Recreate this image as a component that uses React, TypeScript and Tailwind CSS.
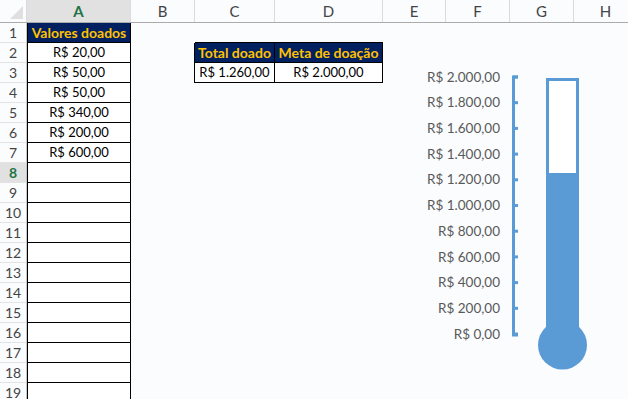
import React from "react";

const font = { fontFamily: "Lato, 'Open Sans', sans-serif" };

const headers = [
  { l: "A", w: "w-[104px]", sel: true },
  { l: "B", w: "w-[64px]" },
  { l: "C", w: "w-[80px]" },
  { l: "D", w: "w-[108px]" },
  { l: "E", w: "w-[63px]" },
  { l: "F", w: "w-[64px]" },
  { l: "G", w: "w-[64px]" },
  { l: "H", w: "w-[64px]" },
];

const donations = ["R$ 20,00", "R$ 50,00", "R$ 50,00", "R$ 340,00", "R$ 200,00", "R$ 600,00"];

const axisLabels = [
  "R$ 2.000,00",
  "R$ 1.800,00",
  "R$ 1.600,00",
  "R$ 1.400,00",
  "R$ 1.200,00",
  "R$ 1.000,00",
  "R$ 800,00",
  "R$ 600,00",
  "R$ 400,00",
  "R$ 200,00",
  "R$ 0,00",
];

function Row({ n }: { n: number }) {
  const selected = n === 8;
  const inTable = n === 2 || n === 3;
  return (
    <div className="flex h-[20px]">
      <div
        className={
          "w-[27px] shrink-0 flex items-center justify-center border-r border-b border-r-[#c6c6c6] border-b-[#e3e3e3] text-[14px] " +
          (selected ? "bg-[#e1e1e1] text-[#217346] font-bold" : "text-[#444]")
        }
      >
        {n}
      </div>
      {n === 1 ? (
        <div className="w-[104px] shrink-0 flex items-center justify-center border-l border-r border-b border-black bg-[#002060] text-[#ffc000] font-bold text-[14px]">
          Valores doados
        </div>
      ) : (
        <div className="w-[104px] shrink-0 flex items-center justify-center border-r border-b border-l border-black bg-white text-[13px] text-black">
          {donations[n - 2] ?? ""}
        </div>
      )}
      <div className={"w-[64px] shrink-0 " + (inTable ? "border-r border-black" : "")} />
      {n === 2 ? (
        <>
          <div className="w-[80px] shrink-0 flex items-center justify-center border-r border-b border-black bg-[#002060] text-[#ffc000] font-bold text-[14px]">
            Total doado
          </div>
          <div className="w-[108px] shrink-0 flex items-center justify-center border-r border-b border-black bg-[#002060] text-[#ffc000] font-bold text-[14px]">
            Meta de doação
          </div>
        </>
      ) : n === 3 ? (
        <>
          <div className="w-[80px] shrink-0 flex items-center justify-center border-r border-b border-black bg-white text-[13px]">
            R$ 1.260,00
          </div>
          <div className="w-[108px] shrink-0 flex items-center justify-center border-r border-b border-black bg-white text-[13px]">
            R$ 2.000,00
          </div>
        </>
      ) : (
        <>
          <div className={"w-[80px] shrink-0 " + (n === 1 ? "border-b border-black" : "")} />
          <div className={"w-[108px] shrink-0 " + (n === 1 ? "border-b border-black" : "")} />
        </>
      )}
    </div>
  );
}

function Thermometer() {
  const blue = "#5b9bd5";
  return (
    <div className="absolute left-[410px] top-[64px] flex">
      <div className="flex flex-col w-[90px] text-[#595959] text-[13.5px]">
        {axisLabels.map((l) => (
          <div key={l} className="h-[25.7px] flex items-center justify-end">
            {l}
          </div>
        ))}
      </div>
      <svg width="100" height="310" viewBox="0 0 100 310">
        <path d="M18 13 H13.5 V271 H18" fill="none" stroke={blue} strokeWidth="3" />
        {axisLabels.map((_, i) => (
          <line key={i} x1="13" x2="18" y1={13 + 25.7 * i} y2={13 + 25.7 * i} stroke={blue} strokeWidth="3" />
        ))}
        <rect x="46" y="14" width="33" height="267" fill={blue} />
        <rect x="49" y="17" width="27" height="92" fill="#ffffff" />
        <circle cx="62.5" cy="281" r="24.5" fill={blue} />
      </svg>
    </div>
  );
}

export default function App() {
  return (
    <div className="relative w-[628px] h-[399px] overflow-hidden bg-[#fafcfe]" style={font}>
      <div className="flex h-[23px] border-b border-[#ababab]">
        <div className="w-[27px] shrink-0 relative border-r border-[#dadbdc]">
          <svg className="absolute right-[3px] bottom-[3px]" width="13" height="13" viewBox="0 0 13 13">
            <polygon points="13,0 13,13 0,13" fill="#dfdfdf" />
          </svg>
        </div>
        {headers.map((h) => (
          <div
            key={h.l}
            className={
              h.w +
              " shrink-0 flex items-center justify-center border-r border-[#dadbdc] text-[15px] " +
              (h.sel ? "bg-[#e1e1e1] text-[#217346] font-bold" : "text-[#444]")
            }
          >
            {h.l}
          </div>
        ))}
      </div>
      {Array.from({ length: 19 }, (_, i) => (
        <Row key={i} n={i + 1} />
      ))}
      <Thermometer />
    </div>
  );
}
